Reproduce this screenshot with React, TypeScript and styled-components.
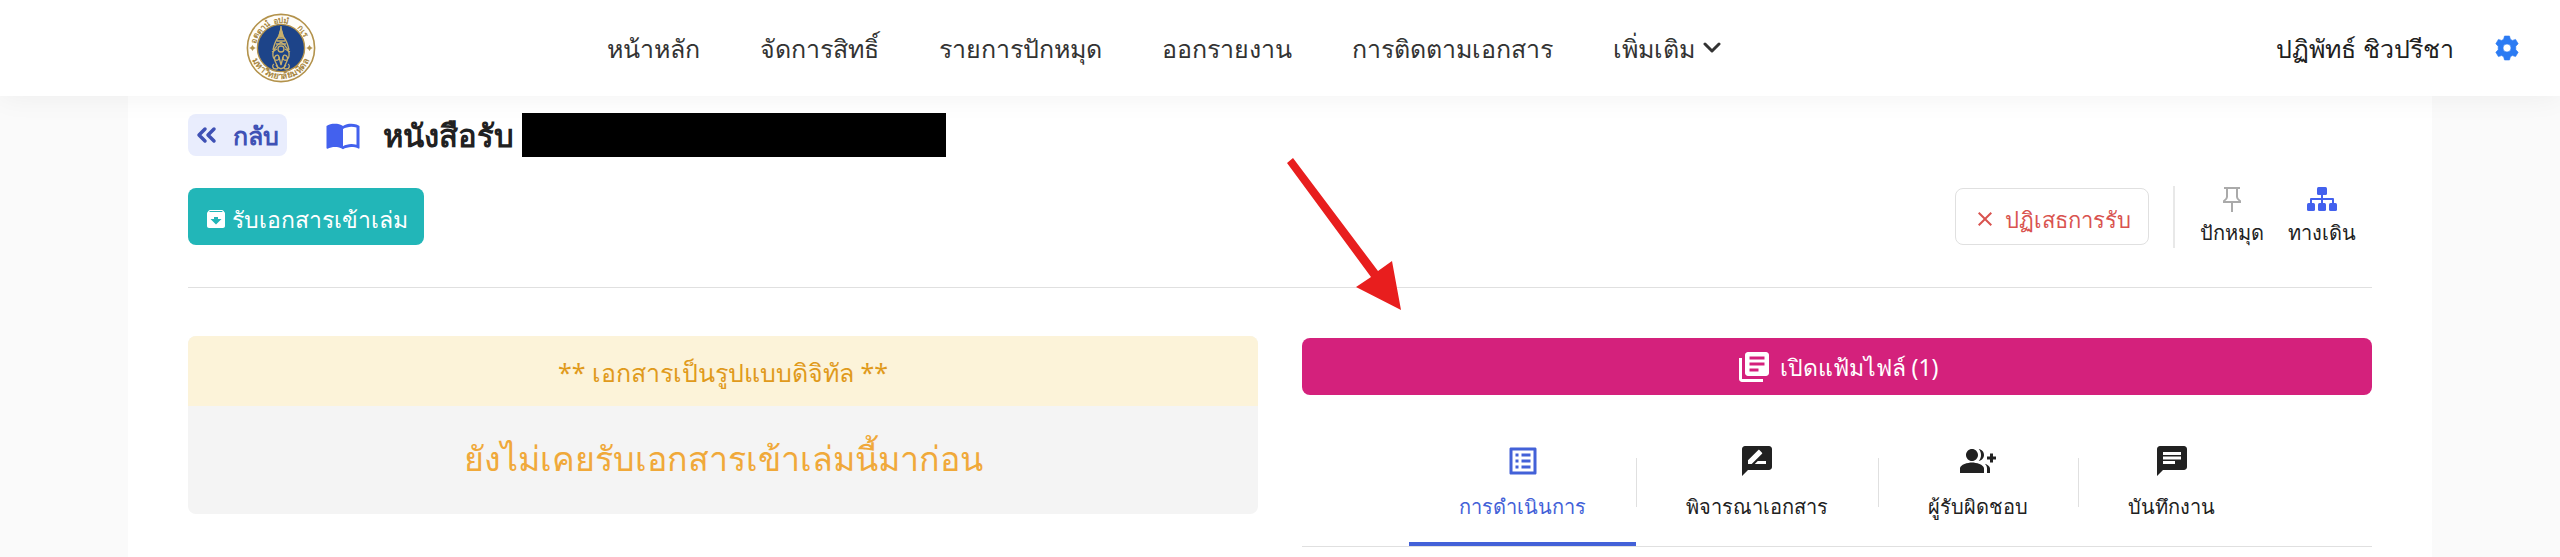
import React from 'react';
import styled, { createGlobalStyle } from 'styled-components';
import {
  MdArchive, MdChat, MdClose, MdGroupAdd, MdLibraryBooks, MdListAlt, MdRateReview,
} from 'react-icons/md';

const Global = createGlobalStyle`
  *, *::before, *::after { box-sizing: border-box; }
  body {
    margin: 0;
    background: #fafafa;
    color: #212121;
    font-family: "Noto Sans", "Liberation Sans", sans-serif;
    font-size: 25px;
    line-height: 36px;
  }
  button { font: inherit; color: inherit; cursor: pointer; }
  a { color: inherit; text-decoration: none; }
  svg { display: block; flex: none; }
`;

const Header = styled.header`
  position: relative;
  z-index: 1;
  display: flex;
  align-items: center;
  height: 96px;
  padding: 0 40px 0 246px;
  background: #fff;
  box-shadow: 0 0 28px rgba(0, 0, 0, 0.06);
`;

const Nav = styled.nav`
  display: flex;
  gap: 60px;
  margin-left: 291px;
  white-space: nowrap;
  color: #333;
`;

const MoreButton = styled.button`
  display: flex;
  align-items: center;
  gap: 8px;
  padding: 0;
  border: 0;
  background: none;
`;

const User = styled.div`
  display: flex;
  align-items: center;
  gap: 40px;
  margin-left: auto;
  white-space: nowrap;
`;

const IconButton = styled.button`
  padding: 0;
  border: 0;
  background: none;
  color: #2b7bf3;
`;

const Page = styled.main`
  width: 90%;
  min-height: calc(100vh - 96px);
  margin: 0 auto;
  padding: 16px 60px 0;
  background: #fff;
`;

const TitleRow = styled.div`
  display: flex;
  align-items: center;
  height: 46px;
`;

const BackButton = styled.button`
  display: flex;
  align-items: center;
  gap: 15px;
  height: 42px;
  padding: 0 8px;
  border: 0;
  border-radius: 8px;
  background: #e9edfd;
  color: #3f51b5;
  font-weight: 700;
`;

const BookIcon = styled.svg`
  margin: 0 22px 0 38px;
`;

const Title = styled.h1`
  margin: 0;
  font-size: 31px;
  line-height: 44px;
`;

const Redacted = styled.span`
  width: 424px;
  height: 44px;
  margin-left: 8px;
  background: #000;
`;

const Actions = styled.div`
  position: relative;
  display: flex;
  align-items: center;
  height: 130px;
  padding-bottom: 12px;
  border-bottom: 1px solid #e0e0e0;
`;

const ActionButton = styled.button<{ $kind: 'primary' | 'outline' }>`
  display: flex;
  align-items: center;
  justify-content: center;
  gap: ${(p) => (p.$kind === 'primary' ? 4 : 8)}px;
  height: 57px;
  padding: 4px ${(p) => (p.$kind === 'primary' ? 16 : 17)}px 0;
  border: ${(p) => (p.$kind === 'primary' ? '0' : '1px solid #e0e0e0')};
  border-radius: 8px;
  background: ${(p) => (p.$kind === 'primary' ? '#22b6b8' : '#fff')};
  color: ${(p) => (p.$kind === 'primary' ? '#fff' : '#d9534f')};
  font-size: ${(p) => (p.$kind === 'primary' ? 23 : 22)}px;
  white-space: nowrap;
`;

const ActionGroup = styled.div`
  display: flex;
  align-items: center;
  margin-left: auto;
  padding-right: 16px;
`;

const Divider = styled.span`
  width: 2px;
  height: 62px;
  margin: 0 25px 0 24px;
  background: #e8e8e8;
`;

const ToolButton = styled.button`
  display: flex;
  flex-direction: column;
  align-items: center;
  gap: 6px;
  padding: 0;
  margin-right: 24px;
  border: 0;
  background: none;
  font-size: 20px;
  line-height: 30px;
  white-space: nowrap;
  &:last-child { margin-right: 0; }
`;

const Arrow = styled.svg`
  position: absolute;
  top: 0;
  left: 50%;
`;

const Columns = styled.div`
  display: grid;
  grid-template-columns: 1fr 1fr;
  gap: 44px;
  align-items: start;
  padding-top: 48px;
`;

const Notice = styled.section`
  overflow: hidden;
  border-radius: 8px;
  background: #f4f4f4;
  text-align: center;
`;

const NoticeHead = styled.p`
  margin: 0;
  padding: 18px 0 16px;
  background: #fcf3d9;
  color: #e09a1c;
`;

const NoticeBody = styled.p`
  margin: 0;
  padding: 26px 0 30px;
  color: #f0a93a;
  font-size: 34px;
  line-height: 52px;
`;

const OpenFiles = styled.button`
  display: flex;
  align-items: center;
  justify-content: center;
  gap: 8px;
  width: 100%;
  height: 57px;
  margin-top: 2px;
  border: 0;
  border-radius: 8px;
  background: #d4217c;
  color: #fff;
  font-size: 23px;
`;

const Tabs = styled.div`
  display: flex;
  justify-content: center;
  margin-top: 28px;
  border-bottom: 1px solid #e0e0e0;
`;

const Tab = styled.button<{ $active?: boolean }>`
  position: relative;
  display: flex;
  flex-direction: column;
  align-items: center;
  gap: 13px;
  height: 123px;
  padding: 20px 50px 0;
  border: 0;
  border-bottom: 4px solid ${(p) => (p.$active ? '#4361d8' : 'transparent')};
  background: none;
  color: ${(p) => (p.$active ? '#4361d8' : '#212121')};
  font-size: 20px;
  line-height: 30px;
  white-space: nowrap;
  &:not(:first-child)::before {
    content: "";
    position: absolute;
    left: 0;
    top: 35px;
    width: 1px;
    height: 49px;
    background: #e0e0e0;
  }
`;

const Emblem = () => (
  <svg width="70" height="70" viewBox="0 0 70 70" role="img" aria-label="มหาวิทยาลัยมหิดล">
    <defs>
      <path id="ring-top" d="M10 35a25 25 0 0 1 50 0" />
      <path id="ring-bottom" d="M4 35a31 31 0 0 0 62 0" />
    </defs>
    <circle cx="35" cy="35" r="33.6" fill="#fffdf8" stroke="#b3924b" strokeWidth="1.6" />
    <circle cx="35" cy="35" r="23.6" fill="#1d4489" stroke="#b3924b" strokeWidth="1.4" />
    <g fill="#a98843" fontSize="8" fontWeight="700" textAnchor="middle">
      <text><textPath href="#ring-top" startOffset="20%">อตฺตานํ</textPath></text>
      <text><textPath href="#ring-top" startOffset="50%">อุปมํ</textPath></text>
      <text><textPath href="#ring-top" startOffset="79%">กเร</textPath></text>
      <text fontSize="9"><textPath href="#ring-bottom" startOffset="50%">มหาวิทยาลัยมหิดล</textPath></text>
    </g>
    <path d="M6.500 32l1.300 2 2 1-2 1-1.300 2-1.300-2-2-1 2-1zM63.500 32l1.300 2 2 1-2 1-1.300 2-1.300-2-2-1 2-1z" fill="#b3924b" />
    <g fill="none" stroke="#c9b06c" strokeWidth="1.300">
      <path d="M35 13v10M35 16l-2 7c-3 4-5 9-6 14M35 16l2 7c3 4 5 9 6 14M32 25h6M31 28h8M30 31h10" />
      <path d="M35 29c-5 4-9 8-8 14s7 5 6 1-6-1-4 4 5 8 1 8-4-4-2-5M35 29c5 4 9 8 8 14s-7 5-6 1 6-1 4 4-5 8-1 8 4-4 2-5" />
      <circle cx="35" cy="36" r="3" />
      <path d="M31 36l-5 3M39 36l5 3M33 44l2 8 2-8M30 52c3 5 7 5 10 0" />
    </g>
    <path d="M35 13l3 11h-6z" fill="#c9b06c" />
  </svg>
);

const Gear = () => (
  <svg width="26" height="26" viewBox="0 0 26 26" fill="#2b7bf3">
    <path
      fillRule="evenodd"
      d="M10.500 1h5l.9 3.300 2 1.100 3.200-1 2.600 4.400-2.400 2.400v3.600l2.400 2.400-2.600 4.400-3.200-1-2 1.100-.9 3.300h-5l-.9-3.300-2-1.100-3.200 1-2.600-4.400 2.400-2.400v-3.600l-2.400-2.400 2.600-4.400 3.200 1 2-1.100zM13 9a4 4 0 1 0 0 8 4 4 0 0 0 0-8z"
      stroke="#2b7bf3"
      strokeWidth=".6"
      strokeLinejoin="round"
    />
  </svg>
);

const links = ['หน้าหลัก', 'จัดการสิทธิ์', 'รายการปักหมุด', 'ออกรายงาน', 'การติดตามเอกสาร'];

const tabs = [
  { label: 'การดำเนินการ', Icon: MdListAlt },
  { label: 'พิจารณาเอกสาร', Icon: MdRateReview },
  { label: 'ผู้รับผิดชอบ', Icon: MdGroupAdd },
  { label: 'บันทึกงาน', Icon: MdChat },
];

export default function App() {
  return (
    <>
      <Global />
      <Header>
        <Emblem />
        <Nav>
          {links.map((label) => <a key={label} href="#">{label}</a>)}
          <MoreButton>
            เพิ่มเติม
            <svg width="18" height="12" viewBox="0 0 18 12" fill="none" stroke="#333" strokeWidth="3" strokeLinecap="round" strokeLinejoin="round">
              <path d="M2 2l7 7 7-7" />
            </svg>
          </MoreButton>
        </Nav>
        <User>
          <span>ปฏิพัทธ์ ชิวปรีชา</span>
          <IconButton aria-label="ตั้งค่า"><Gear /></IconButton>
        </User>
      </Header>

      <Page>
        <TitleRow>
          <BackButton>
            <svg width="22" height="18" viewBox="0 0 22 18" fill="none" stroke="#3f51b5" strokeWidth="3.500" strokeLinecap="round" strokeLinejoin="round">
              <path d="M9 3L3 9l6 6M18 3l-6 6 6 6" />
            </svg>
            กลับ
          </BackButton>
          <BookIcon width="36" height="36" viewBox="0 0 24 24" fill="#4361ee">
            <path d="M21 5c-1.110-.350-2.330-.500-3.500-.500-1.950 0-4.050.400-5.500 1.500-1.450-1.100-3.550-1.500-5.500-1.500S2.450 4.900 1 6v14.650c0 .250.250.500.500.500.100 0 .150-.050.250-.050C3.100 20.450 5.050 20 6.500 20c1.950 0 4.050.400 5.500 1.500 1.350-.850 3.800-1.500 5.500-1.500 1.650 0 3.350.300 4.750 1.050.100.050.150.050.250.050.250 0 .500-.250.500-.500V6c-.600-.450-1.250-.750-2-1zm0 13.500c-1.100-.350-2.300-.500-3.500-.500-1.700 0-4.150.650-5.500 1.500V8c1.350-.850 3.800-1.500 5.500-1.500 1.200 0 2.400.150 3.500.500v11.500z" />
          </BookIcon>
          <Title>หนังสือรับ</Title>
          <Redacted />
        </TitleRow>

        <Actions>
          <ActionButton $kind="primary">
            <MdArchive size={24} />
            รับเอกสารเข้าเล่ม
          </ActionButton>
          <ActionGroup>
            <ActionButton $kind="outline">
              <MdClose size={24} />
              ปฏิเสธการรับ
            </ActionButton>
            <Divider />
            <ToolButton>
              <svg width="20" height="26" viewBox="0 0 20 26" fill="none" stroke="#aaa" strokeWidth="2">
                <path d="M2 2h16M5 2v9q0 2-3 4v1h16v-1q-3-2-3-4V2M10 16v10" />
              </svg>
              ปักหมุด
            </ToolButton>
            <ToolButton>
              <svg width="32" height="26" viewBox="0 0 32 26" fill="#4361ee">
                <rect x="11" y="1" width="10" height="8" rx="1.500" />
                <rect x="1" y="17" width="8" height="8" rx="1.500" />
                <rect x="12" y="17" width="8" height="8" rx="1.500" />
                <rect x="23" y="17" width="8" height="8" rx="1.500" />
                <path d="M5 17v-4h22v4M16 8v9" fill="none" stroke="#4361ee" strokeWidth="2" strokeLinejoin="round" />
              </svg>
              ทางเดิน
            </ToolButton>
          </ActionGroup>
          <Arrow width="130" height="156" viewBox="0 0 130 156" fill="#e81e1e" aria-hidden="true">
            <path d="M7 5L13 0 98 113 112 103 121 152 76 129 91 119z" />
          </Arrow>
        </Actions>

        <Columns>
          <Notice>
            <NoticeHead>** เอกสารเป็นรูปแบบดิจิทัล **</NoticeHead>
            <NoticeBody>ยังไม่เคยรับเอกสารเข้าเล่มนี้มาก่อน</NoticeBody>
          </Notice>
          <section>
            <OpenFiles>
              <MdLibraryBooks size={36} />
              เปิดแฟ้มไฟล์ (1)
            </OpenFiles>
            <Tabs role="tablist">
              {tabs.map(({ label, Icon }, i) => (
                <Tab key={label} role="tab" aria-selected={i === 0} $active={i === 0}>
                  <Icon size={36} />
                  {label}
                </Tab>
              ))}
            </Tabs>
          </section>
        </Columns>
      </Page>
    </>
  );
}
